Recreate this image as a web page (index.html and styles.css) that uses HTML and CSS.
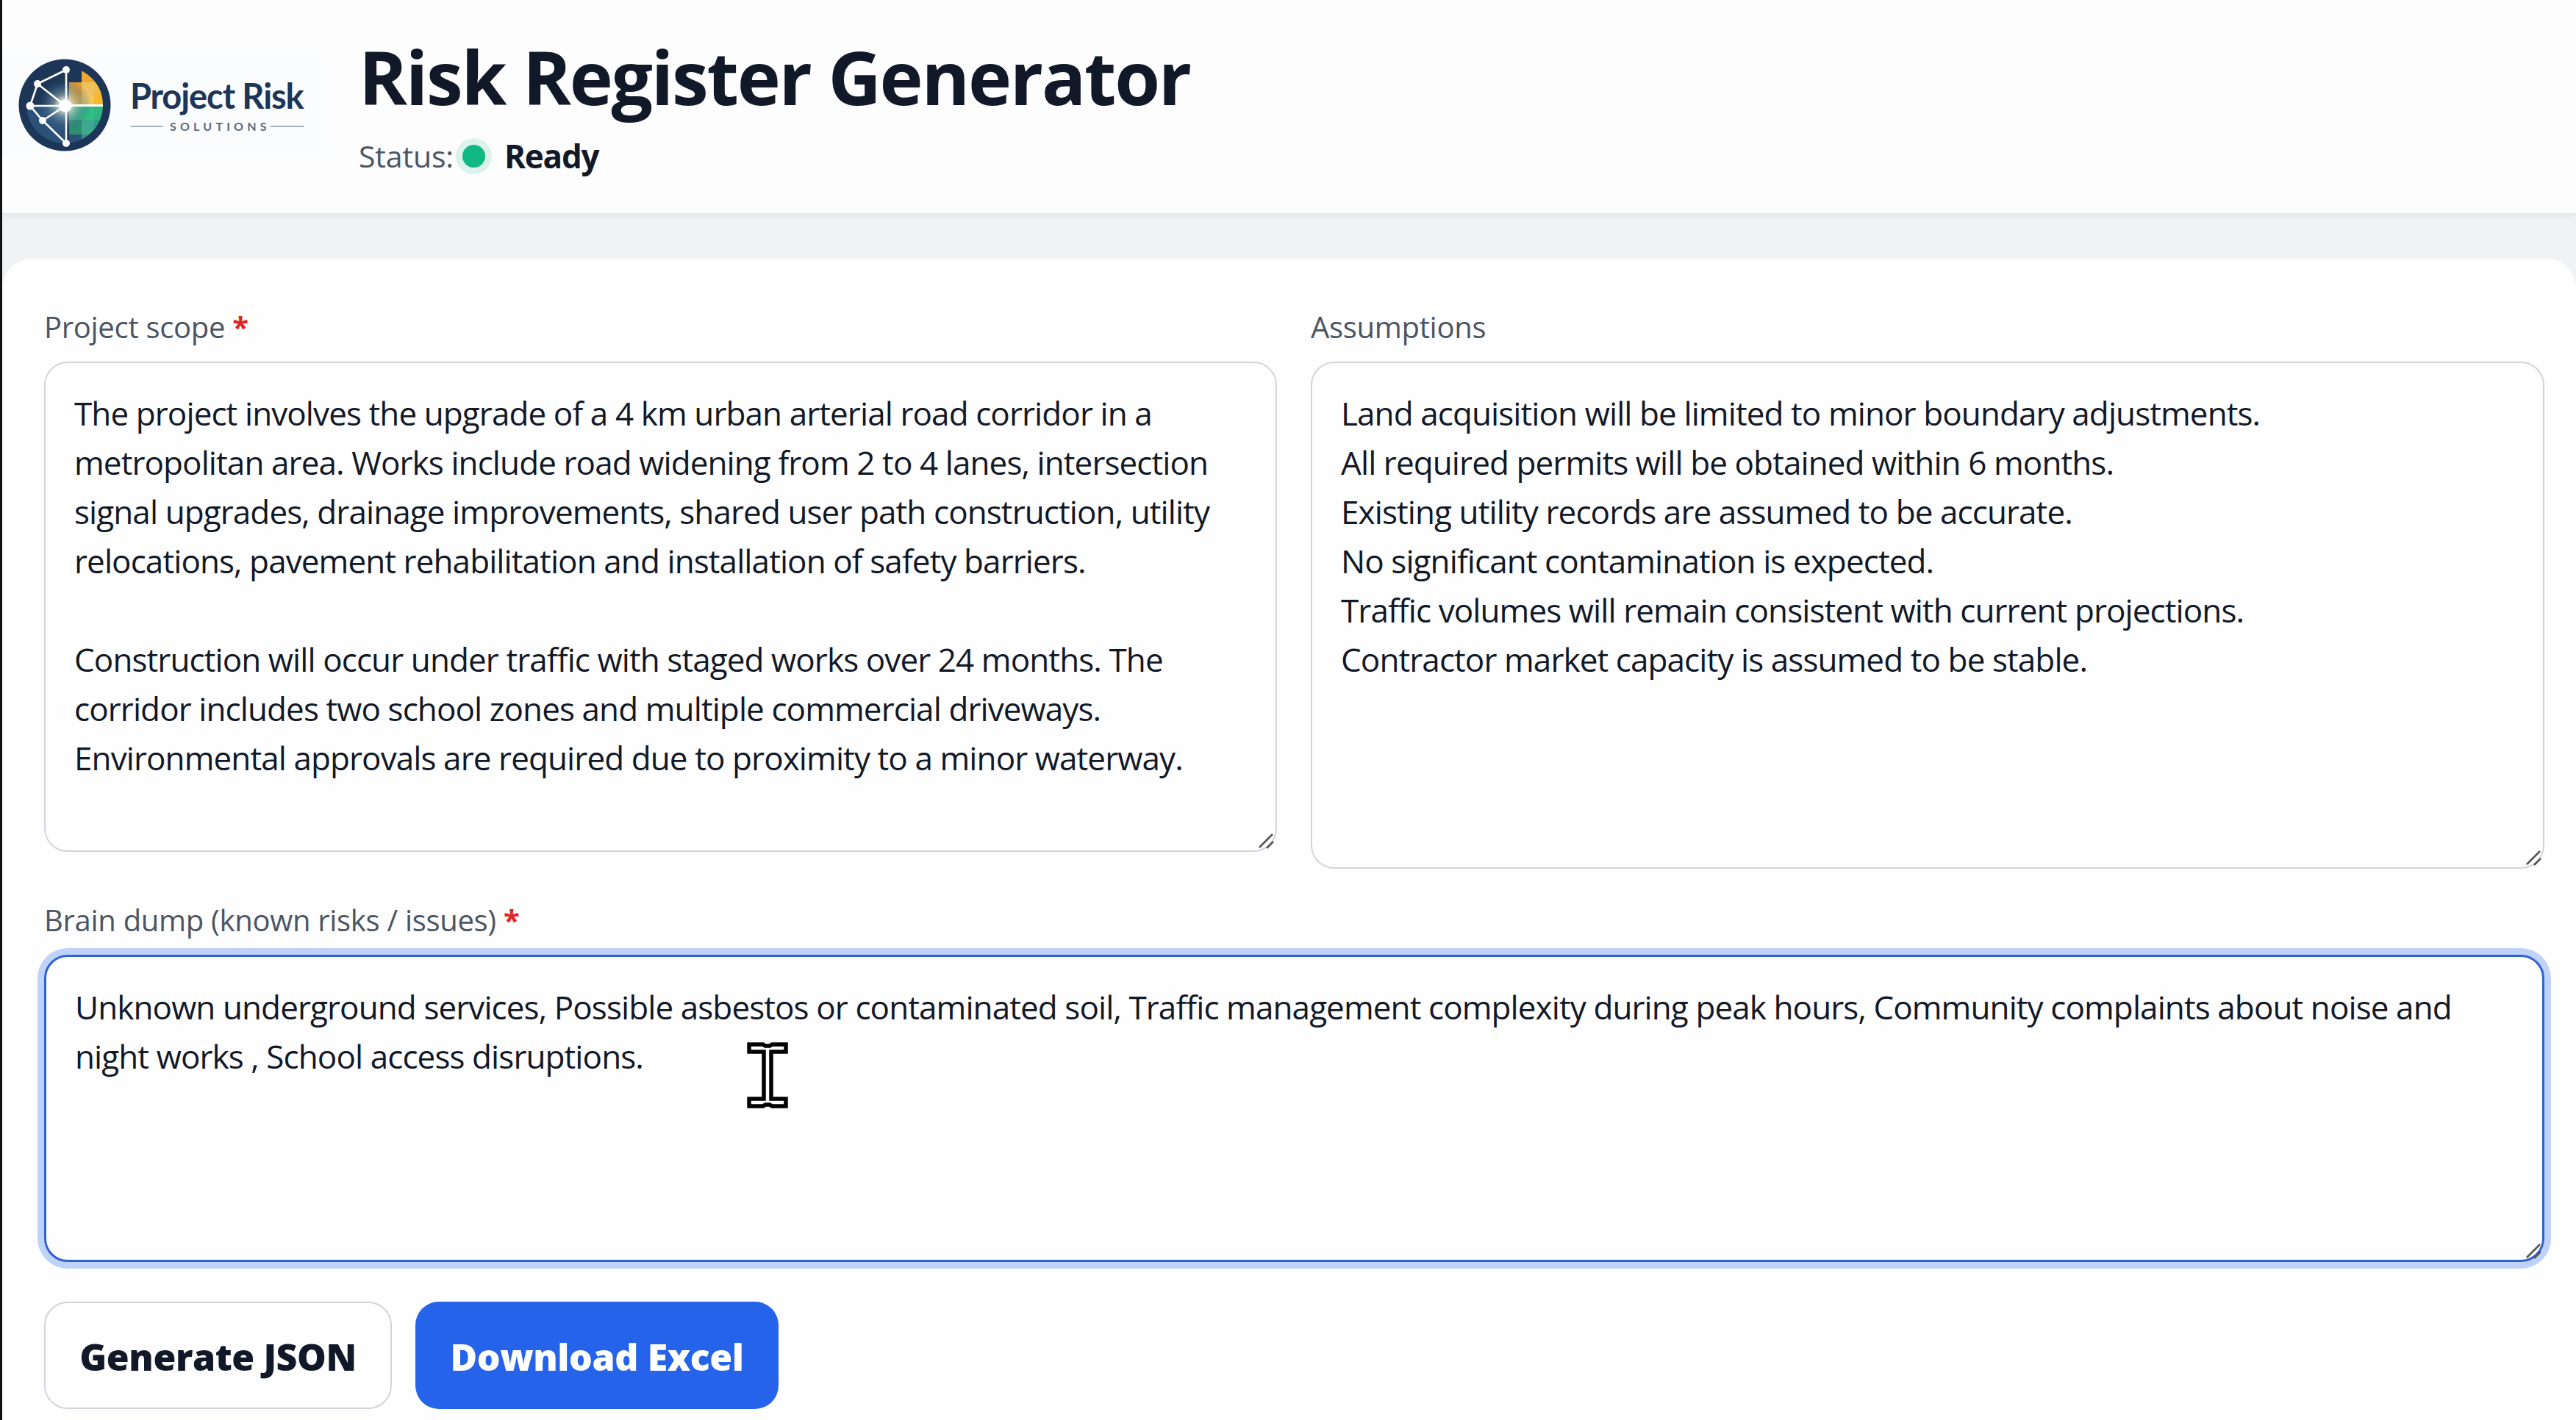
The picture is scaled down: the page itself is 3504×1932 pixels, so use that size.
FILE: index.html
```html
<!DOCTYPE html>
<html lang="en">
<head>
<meta charset="utf-8">
<title>Risk Register Generator</title>
<link rel="stylesheet" href="styles.css">
</head>
<body>
<div class="app">
  <header class="topbar">
    <svg class="logo" viewBox="0 -5 445 139" width="445" height="139" role="img" aria-label="Project Risk Solutions">
      <defs>
        <clipPath id="disc"><circle cx="88" cy="65" r="52"/></clipPath>
        <radialGradient id="glow" cx="88" cy="65" r="36" gradientUnits="userSpaceOnUse">
          <stop offset="0" stop-color="#ffffff"/>
          <stop offset=".18" stop-color="#f2f3e6" stop-opacity=".95"/>
          <stop offset=".42" stop-color="#a9bfb8" stop-opacity=".55"/>
          <stop offset=".72" stop-color="#4f7b98" stop-opacity=".35"/>
          <stop offset="1" stop-color="#2f5a80" stop-opacity="0"/>
        </radialGradient>
      </defs>
      <rect y="-5" width="445" height="139" fill="#fbfcfe"/>
      <circle cx="88" cy="65" r="62.5" fill="#1d3557"/>
      <g clip-path="url(#disc)">
        <path d="M26 65h62v58H26z" fill="#2c5178"/>
        <path d="M94 34h17v31H94z" fill="#e59e2c"/>
        <path d="M111 10h17v24h-17z" fill="#eda92f"/>
        <path d="M111 34h17v16h-17z" fill="#efc05e"/>
        <path d="M111 50h17v15h-17z" fill="#f0c766"/>
        <path d="M128 10h23v55h-23z" fill="#f7b82c"/>
        <path d="M128 34h23v16h-23z" fill="#efbd4c"/>
        <path d="M94 67h17v18H94z" fill="#38b47f"/>
        <path d="M111 67h17v18h-17z" fill="#32bd82"/>
        <path d="M128 67h23v18h-23z" fill="#2db584"/>
        <path d="M94 85h17v20H94z" fill="#2d8f72"/>
        <path d="M111 85h17v20h-17z" fill="#3fa88f"/>
        <path d="M128 85h23v20h-23z" fill="#2f9d88"/>
        <path d="M94 105h17v20H94z" fill="#2c5178"/>
        <path d="M111 105h17v20h-17z" fill="#3b8c8b"/>
        <circle cx="88" cy="65" r="36" fill="url(#glow)"/>
      </g>
      <path d="M88 65.500h52" stroke="#fff" stroke-width="3"/>
      <g fill="none" stroke="#fff" stroke-width="2.6">
        <path d="M90 17V117L58 86 41 66 51 36 90 17M51 36 89 66 41 66M89 66 58 86"/>
      </g>
      <g fill="#fff">
        <circle cx="90" cy="17" r="5"/>
        <circle cx="51" cy="36" r="5"/>
        <circle cx="41" cy="66" r="5.500"/>
        <circle cx="58" cy="86" r="5"/>
        <circle cx="90" cy="117" r="5"/>
        <circle cx="89" cy="66" r="8.500"/>
      </g>
      <text class="logo-name" x="177" y="70">Project Risk</text>
      <path d="M178 94h44M368 94h45" stroke="#8b97a5" stroke-width="1.600"/>
      <text class="logo-sub" x="231" y="100">SOLUTIONS</text>
    </svg>
    <div class="title-block">
      <h1 class="title">Risk Register Generator</h1>
      <div class="status">
        <span class="status-label">Status:</span>
        <span class="status-dot"></span>
        <strong class="status-value">Ready</strong>
      </div>
    </div>
  </header>

  <main class="card">
    <div class="top-fields">
      <div class="field">
        <label class="label" for="scope">Project scope <span class="req">*</span></label>
        <div class="box">
          <textarea id="scope" class="input input-scope" spellcheck="false">The project involves the upgrade of a 4 km urban arterial road corridor in a
metropolitan area. Works include road widening from 2 to 4 lanes, intersection
signal upgrades, drainage improvements, shared user path construction, utility
relocations, pavement rehabilitation and installation of safety barriers.

Construction will occur under traffic with staged works over 24 months. The
corridor includes two school zones and multiple commercial driveways.
Environmental approvals are required due to proximity to a minor waterway.</textarea>
          <svg class="grip" viewBox="0 0 24 24" width="24" height="24"><path d="M3 21 21 3M13 22 22 13"/></svg>
        </div>
      </div>
      <div class="field">
        <label class="label" for="assumptions">Assumptions</label>
        <div class="box">
          <textarea id="assumptions" class="input input-assumptions" spellcheck="false">Land acquisition will be limited to minor boundary adjustments.
All required permits will be obtained within 6 months.
Existing utility records are assumed to be accurate.
No significant contamination is expected.
Traffic volumes will remain consistent with current projections.
Contractor market capacity is assumed to be stable.</textarea>
          <svg class="grip" viewBox="0 0 24 24" width="24" height="24"><path d="M3 21 21 3M13 22 22 13"/></svg>
        </div>
      </div>
    </div>

    <div class="field field-brain">
      <label class="label" for="brain">Brain dump (known risks / issues) <span class="req">*</span></label>
      <div class="box">
        <textarea id="brain" class="input input-brain is-focused" spellcheck="false">Unknown underground services, Possible asbestos or contaminated soil, Traffic management complexity during peak hours, Community complaints about noise and
night works , School access disruptions.</textarea>
        <svg class="grip" viewBox="0 0 24 24" width="24" height="24"><path d="M3 21 21 3M13 22 22 13"/></svg>
        <svg class="cursor" viewBox="0 0 56 90" width="56" height="90"><path d="M3 3h19l3 2h6l3-2h19v10H33v64h20v10H34l-3-2h-6l-3 2H3V77h20V13H3z" fill="#fff" stroke="#000" stroke-width="5.500"/></svg>
      </div>
    </div>

    <div class="actions">
      <button class="btn btn-ghost" type="button">Generate JSON</button>
      <button class="btn btn-primary" type="button">Download Excel</button>
    </div>
  </main>
</div>
</body>
</html>
```
FILE: styles.css
```css
* { box-sizing: border-box; }
html, body { margin: 0; height: 100%; }
body {
  background: #f1f2f4;
  font-family: "Open Sans", "Noto Sans", "Liberation Sans", sans-serif;
  color: #111827;
  overflow: hidden;
}
.app {
  height: 1932px;
  border-left: 3px solid #111;
  display: flex;
  flex-direction: column;
  overflow: hidden;
}
.topbar {
  height: 290px;
  flex: none;
  background: #fdfdfd;
  box-shadow: 0 3px 10px rgba(17, 24, 39, .07);
  display: flex;
  align-items: flex-start;
  position: relative;
}
.logo { margin: 73px 0 0 -3px; flex: none; }
.logo-name { font-family: "Lato", sans-serif; font-weight: 700; font-size: 47px; letter-spacing: -1.1px; fill: #1d3557; }
.logo-sub { font-family: "Lato", sans-serif; font-size: 16px; letter-spacing: 5.2px; fill: #5d6b7b; font-weight: 700; }
.title-block { margin: 44px 0 0 43px; }
.title {
  margin: 0;
  font-size: 100px;
  line-height: 120px;
  font-weight: 700;
  color: #111827;
  letter-spacing: -2.25px;
}
.status { display: flex; align-items: center; margin-top: 18px; height: 60px; }
.status-label { font-size: 41px; color: #4b5563; letter-spacing: -.15px; }
.status-dot {
  width: 31px;
  height: 31px;
  margin-left: 12px;
  border-radius: 50%;
  background: #10b981;
  box-shadow: 0 0 0 9px rgba(16, 185, 129, .14);
}
.status-value { margin-left: 26px; font-size: 44px; font-weight: 700; letter-spacing: -1.2px; color: #111827; }

.card {
  flex: 1;
  margin-top: 62px;
  background: #fefefe;
  border-radius: 40px 40px 0 0;
  padding: 62px 43px 0 57px;
}
.top-fields {
  display: grid;
  grid-template-columns: 1677px 1678px;
  column-gap: 46px;
  align-items: start;
}
.field { display: flex; flex-direction: column; }
.field-brain { margin-top: 39px; }
.label {
  height: 78px;
  font-size: 40px;
  line-height: 62px;
  color: #4b5563;
  letter-spacing: -.3px;
}
.req { color: #dc2626; font-weight: 700; }
.box { position: relative; display: flex; }
.input {
  display: block;
  width: 100%;
  margin: 0;
  padding: 35px 39px;
  border: 2px solid #d1d5db;
  border-radius: 32px;
  background: #fefefe;
  font: inherit;
  font-size: 44px;
  line-height: 67px;
  letter-spacing: -.9px;
  color: #111827;
  resize: none;
  outline: none;
  overflow: hidden;
  white-space: pre-wrap;
}
.input-scope { height: 667px; }
.input-assumptions { height: 690px; }
.input-brain { height: 418px; }
.is-focused {
  border: 3px solid #2f62d6;
  box-shadow: 0 0 0 9px #bfd2f8;
}
.grip { position: absolute; right: 3px; bottom: 3px; pointer-events: none; }
.grip path { fill: none; stroke: #555; stroke-width: 2.6; }
.cursor { position: absolute; left: 956px; top: 119px; pointer-events: none; }
.actions { display: flex; gap: 32px; margin-top: 54px; }
.btn {
  height: 146px;
  border-radius: 32px;
  font: inherit;
  font-size: 50px;
  font-weight: 800;
  letter-spacing: -.4px;
  padding: 4px 0 0;
}
.btn-ghost { width: 473px; background: #fefefe; border: 2px solid #d1d5db; color: #111827; }
.btn-primary { width: 494px; background: #2563eb; border: 0; color: #fff; }
```
